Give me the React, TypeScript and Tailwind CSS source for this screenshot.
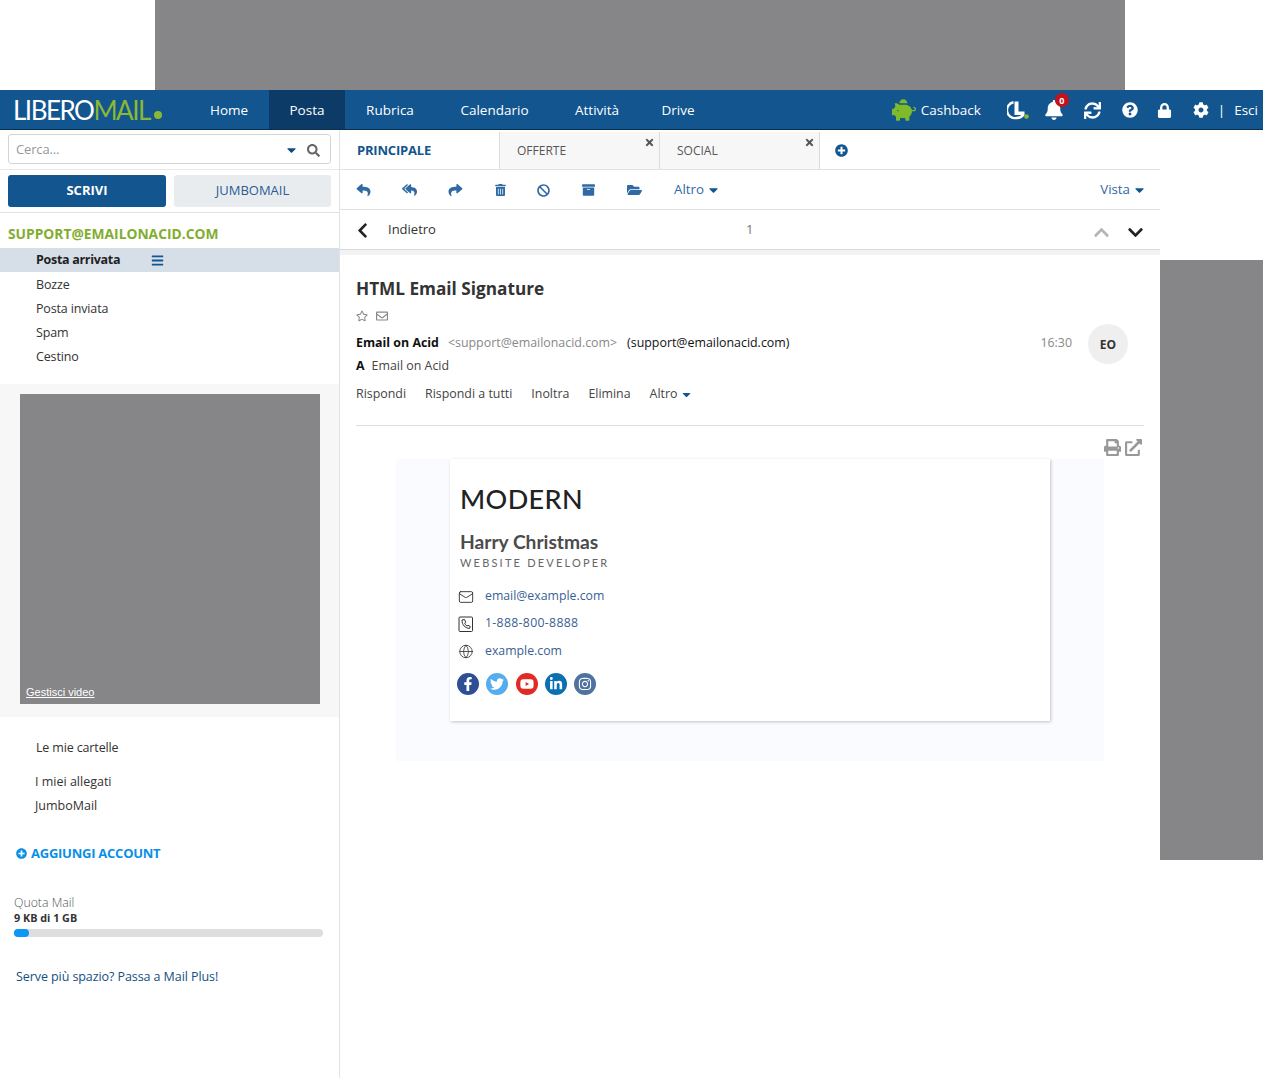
import {
  FaArchive,
  FaBan,
  FaBars,
  FaBell,
  FaCaretDown,
  FaChevronDown,
  FaChevronLeft,
  FaChevronUp,
  FaCog,
  FaExternalLinkAlt,
  FaFacebookF,
  FaFolderOpen,
  FaInstagram,
  FaLinkedinIn,
  FaLock,
  FaPiggyBank,
  FaPlusCircle,
  FaPrint,
  FaQuestionCircle,
  FaRegEnvelope,
  FaRegStar,
  FaReply,
  FaReplyAll,
  FaSearch,
  FaShare,
  FaSync,
  FaTimes,
  FaTrashAlt,
  FaTwitter,
  FaYoutube,
} from "react-icons/fa";
import { LuGlobe, LuMail } from "react-icons/lu";

const navItems = ["Home", "Posta", "Rubrica", "Calendario", "Attività", "Drive"];
const navWidths = ["w-[80px]", "w-[76px]", "w-[90px]", "w-[119px]", "w-[86px]", "w-[76px]"];
const folders = ["Bozze", "Posta inviata", "Spam", "Cestino"];

function LiberoGlyph() {
  return (
    <svg viewBox="0 0 22 20" className="h-[20px] w-[22px]">
      <path d="M6.500 2.200a8 8 0 0 0 3 15.800a8 8 0 0 0 7-3.500" fill="none" stroke="white" strokeWidth="2.400" />
      <path d="M7.500 1.500h4v10h6v3.500h-10z" fill="white" />
      <circle cx="19.500" cy="16.500" r="2.300" fill="#8ab833" />
    </svg>
  );
}

function TopNav() {
  return (
    <header className="flex h-10 items-center border-b border-[#0b2f4f] bg-[#12558f] text-[13.5px] text-white">
      <div className="flex w-[189px] items-center pl-[13px]">
        <span className="font-['Lato',sans-serif] text-[26px] leading-none tracking-[-1.5px]">
          LIBERO<span className="text-[#8ab833]">MAIL</span>
        </span>
        <span className="mt-[11px] ml-[4px] h-[8px] w-[8px] rounded-full bg-[#8ab833]" />
      </div>
      <nav className="flex h-full">
        {navItems.map((item, i) => (
          <a
            key={item}
            className={`flex h-full items-center justify-center pt-[1px] ${navWidths[i]} ${
              item === "Posta" ? "bg-[#0c3b68]" : ""
            }`}
          >
            {item}
          </a>
        ))}
      </nav>
      <div className="ml-auto flex items-center pr-[5px] pt-[1px]">
        <FaPiggyBank className="mr-[5px] -scale-x-100 text-[24px] text-[#7fba2a]" />
        <span>Cashback</span>
        <span className="ml-[26px]">
          <LiberoGlyph />
        </span>
        <span className="relative ml-[15px]">
          <FaBell className="text-[20px]" />
          <span className="absolute -top-[7px] left-[11px] flex h-[14px] w-[14px] items-center justify-center rounded-full bg-[#c4121a] text-[9px] leading-none font-bold">
            0
          </span>
        </span>
        <FaSync className="ml-[20px] text-[17px]" />
        <FaQuestionCircle className="ml-[21px] text-[16px]" />
        <FaLock className="ml-[19px] text-[15px]" />
        <FaCog className="ml-[21px] text-[16px]" />
        <span className="ml-[9px]">|</span>
        <span className="ml-[9px]">Esci</span>
      </div>
    </header>
  );
}

function Sidebar() {
  return (
    <aside className="flex h-[948px] w-[340px] shrink-0 flex-col border-r border-[#e2e2e2] bg-white text-[12.5px] tracking-[-0.15px] text-[#333]">
      <div className="h-10 border-b border-[#e8e8e8] px-2 pt-[4px]">
        <div className="flex h-[30px] items-center rounded-[3px] border border-[#d4d4d4] pt-[2px] pr-[10px] pl-[7px] text-[13px] text-[#999]">
          <span>Cerca...</span>
          <FaCaretDown className="ml-auto w-[9px] text-[14px] text-[#0f4c81]" />
          <FaSearch className="ml-[11px] text-[13px] text-[#666]" />
        </div>
      </div>
      <div className="flex gap-2 border-b border-[#e2e2e2] px-2 py-[5px] tracking-normal">
        <button className="h-8 w-[158px] rounded-[3px] bg-[#12558f] text-[13px] font-bold text-white">SCRIVI</button>
        <button className="h-8 w-[157px] rounded-[3px] bg-[#e9ecef] text-[13px] text-[#2a5d92]">JUMBOMAIL</button>
      </div>
      <div className="px-2 pt-[11px] pb-[4px] text-[13.8px] leading-[20px] font-bold tracking-normal text-[#82ad30]">
        SUPPORT@EMAILONACID.COM
      </div>
      <div className="flex h-6 items-center bg-[#d6dee8] pt-[1px] pl-9 font-bold tracking-[-0.3px] text-[#222]">
        Posta arrivata
        <FaBars className="ml-[31px] text-[13px] text-[#12558f]" />
      </div>
      <ul className="pb-4">
        {folders.map((f) => (
          <li key={f} className="flex h-6 items-center pt-[2px] pl-9">
            {f}
          </li>
        ))}
      </ul>
      <div className="bg-[#f7f7f7] px-5 pt-[10px] pb-[13px]">
        <div className="flex h-[310px] w-[300px] items-end bg-[#868587] px-[6px] py-[5px]">
          <a className="font-['Liberation_Sans',sans-serif] text-[11px] leading-[13px] tracking-normal text-white underline">
            Gestisci video
          </a>
        </div>
      </div>
      <div className="mt-[19px] flex h-6 items-center pl-9">Le mie cartelle</div>
      <ul className="mt-[10px] tracking-normal">
        <li className="flex h-6 items-center pl-[35px]">I miei allegati</li>
        <li className="flex h-6 items-center pl-[35px]">JumboMail</li>
      </ul>
      <div className="mt-[25px] flex items-center pl-4 text-[13px] leading-[21px] font-bold tracking-[-0.25px] text-[#0a8fe6]">
        <FaPlusCircle className="mr-[4px] text-[11px]" />
        AGGIUNGI ACCOUNT
      </div>
      <div className="mt-[30px] pl-[14px] text-[12.3px] leading-[17px] font-light tracking-normal text-[#555]">Quota Mail</div>
      <div className="pl-[14px] text-[10.8px] leading-[14px] font-bold tracking-normal text-[#333]">9 KB di 1 GB</div>
      <div className="mt-[4px] ml-[14px] h-2 w-[309px] rounded-full bg-[#dedede]">
        <div className="h-2 w-[15px] rounded-full bg-[#0a97f5]" />
      </div>
      <a className="mt-[31px] pl-4 text-[12.5px] tracking-[-0.08px] text-[#144f7f]">Serve più spazio? Passa a Mail Plus!</a>
    </aside>
  );
}

function Tabs() {
  return (
    <div className="flex h-10 items-stretch border-b border-[#e2e2e2] pt-[2px] text-[12px] text-[#555]">
      <div className="flex w-[159px] items-center pl-[17px] text-[13px] font-bold tracking-[-0.2px] text-[#12558f]">PRINCIPALE</div>
      {["OFFERTE", "SOCIAL"].map((t) => (
        <div key={t} className="relative flex w-[160px] items-center border-l border-[#dcdcdc] bg-[#f7f7f7] pl-[17px]">
          {t}
          <FaTimes className="absolute top-[5px] right-[4px] text-[11px] text-[#555]" />
        </div>
      ))}
      <div className="flex items-center border-l border-[#dcdcdc] pl-[15px]">
        <FaPlusCircle className="text-[13px] text-[#12558f]" />
      </div>
    </div>
  );
}

function Toolbar() {
  return (
    <div className="flex h-10 items-center border-b border-[#e2e2e2] pt-[1px] pr-[16px] pl-4 text-[13.3px] text-[#2f6aa5]">
      <FaReply className="w-[15px] text-[14px]" />
      <FaReplyAll className="ml-[31px] w-[15px] text-[14px]" />
      <FaShare className="ml-[31px] w-[15px] text-[14px]" />
      <FaTrashAlt className="ml-[31px] w-[13px] text-[12px]" />
      <FaBan className="ml-[30px] w-[13px] text-[13px]" />
      <FaArchive className="ml-[32px] w-[13px] text-[14px]" />
      <FaFolderOpen className="ml-[32px] w-[15px] text-[14px]" />
      <span className="ml-[32px]">Altro</span>
      <FaCaretDown className="ml-[5px] w-[9px] text-[14px] text-[#12558f]" />
      <span className="ml-auto">Vista</span>
      <FaCaretDown className="ml-[5px] w-[9px] text-[14px] text-[#12558f]" />
    </div>
  );
}

function Pager() {
  return (
    <div className="relative flex h-10 items-center border-b border-[#d8d8d8] pt-[1px] pr-4 pl-4 text-[13px] text-[#333]">
      <FaChevronLeft className="-ml-[2px] text-[17px] text-[#222]" />
      <span className="ml-[17px]">Indietro</span>
      <span className="absolute left-[406px] text-[#777]">1</span>
      <FaChevronUp className="mt-[5px] ml-auto text-[17px] text-[#b5b5b5]" />
      <FaChevronDown className="mt-[5px] ml-[17px] text-[17px] text-[#222]" />
    </div>
  );
}

function MessageHeader() {
  return (
    <div className="relative mx-4 h-[171px] border-b border-[#dcdcdc] pt-[21px] text-[12.4px] text-[#444]">
      <h1 className="text-[17.2px] leading-[26px] font-bold text-[#333]">HTML Email Signature</h1>
      <div className="mt-[6px] flex h-4 items-center text-[#888]">
        <FaRegStar className="text-[12px]" />
        <FaRegEnvelope className="ml-[8px] text-[12px]" />
      </div>
      <div className="mt-[10px] flex h-[18px] items-center">
        <b className="text-[#111]">Email on Acid</b>
        <span className="ml-[9px] text-[#888]">&lt;support@emailonacid.com&gt;</span>
        <span className="ml-[10px] text-[#111]">(support@emailonacid.com)</span>
      </div>
      <div className="mt-[5px] flex h-[18px] items-center">
        <b className="mr-[7px] text-[#111]">A</b>
        Email on Acid
      </div>
      <div className="mt-[10px] flex h-[18px] items-center gap-[19px]">
        <span>Rispondi</span>
        <span>Rispondi a tutti</span>
        <span>Inoltra</span>
        <span>Elimina</span>
        <span className="flex items-center">
          Altro
          <FaCaretDown className="ml-[4px] w-[9px] text-[13px] text-[#12558f]" />
        </span>
      </div>
      <span className="absolute top-[79px] right-[72px] text-[#888]">16:30</span>
      <div className="absolute top-[69px] right-4 flex h-10 w-10 items-center justify-center rounded-full bg-[#efefef] pt-[1px] text-[12px] font-bold text-[#333]">
        EO
      </div>
    </div>
  );
}

function Social({ bg, children }: { bg: string; children: React.ReactNode }) {
  return <span className={`flex h-[22px] w-[22px] items-center justify-center rounded-full text-[14px] text-white ${bg}`}>{children}</span>;
}

function Signature() {
  return (
    <div className="mx-[56px] h-[302px] bg-[#f9fbff] pl-[54px]">
      <div className="h-[262px] w-[600px] bg-white pt-[23px] pl-[10px] font-['Lato',sans-serif] shadow-[1px_1px_3px_rgba(0,0,0,0.22)]">
        <div className="text-[27px] leading-[34px] font-medium tracking-[0.4px] text-[#222]">MODERN</div>
        <div className="mt-[13px] text-[19.2px] leading-[26px] font-bold text-[#4b4b4b]">Harry Christmas</div>
        <div className="text-[11px] leading-[15px] tracking-[2.2px] text-[#666]">WEBSITE DEVELOPER</div>
        <div className="mt-[13px] -ml-[2px] flex flex-col font-['Open_Sans',sans-serif] text-[12.3px] text-[#3a5f94]">
          <div className="flex h-[27px] items-center">
            <LuMail className="w-[16px] text-[16px] text-[#333]" strokeWidth={1.4} />
            <span className="ml-[11px]">email@example.com</span>
          </div>
          <div className="flex h-[27px] items-center">
            <svg viewBox="0 0 16 16" className="h-4 w-4 text-[#333]" fill="none" stroke="currentColor">
              <rect x="1" y="1" width="13.5" height="14.5" rx="1" />
              <path d="M4 4c0 5 3 8 7.500 8.500l.8-2-2.300-1.200-1 .8c-1-.6-2-1.800-2.300-3l1-.8L6.500 3.500z" />
            </svg>
            <span className="ml-[11px] tracking-[0.3px]">1-888-800-8888</span>
          </div>
          <div className="flex h-[28px] items-center">
            <LuGlobe className="w-[16px] text-[15px] text-[#333]" strokeWidth={1.3} />
            <span className="ml-[11px]">example.com</span>
          </div>
        </div>
        <div className="mt-[8px] -ml-[3px] flex gap-[7.300px]">
          <Social bg="bg-[#2f4f94]"><FaFacebookF /></Social>
          <Social bg="bg-[#55acee]"><FaTwitter /></Social>
          <Social bg="bg-[#e22a24]"><FaYoutube /></Social>
          <Social bg="bg-[#0a6fb3]"><FaLinkedinIn /></Social>
          <Social bg="bg-[#4f739f]"><FaInstagram /></Social>
        </div>
      </div>
    </div>
  );
}

export default function App() {
  return (
    <div className="h-[1078px] w-[1263px] overflow-hidden bg-white font-['Open_Sans',sans-serif]">
      <div className="h-[90px] pl-[155px]">
        <div className="h-full w-[970px] bg-[#868587]" />
      </div>
      <TopNav />
      <div className="flex">
        <Sidebar />
        <main className="w-[820px] shrink-0">
          <Tabs />
          <Toolbar />
          <Pager />
          <div className="h-[5px] bg-[#f3f3f3]" />
          <MessageHeader />
          <div className="flex h-[33px] items-center justify-end gap-[4px] pt-[9px] pr-[18px] text-[#999]">
            <FaPrint className="text-[17px]" />
            <FaExternalLinkAlt className="text-[17px]" />
          </div>
          <Signature />
        </main>
        <div className="mt-[130px] h-[600px] flex-1 bg-[#868587]" />
      </div>
    </div>
  );
}
